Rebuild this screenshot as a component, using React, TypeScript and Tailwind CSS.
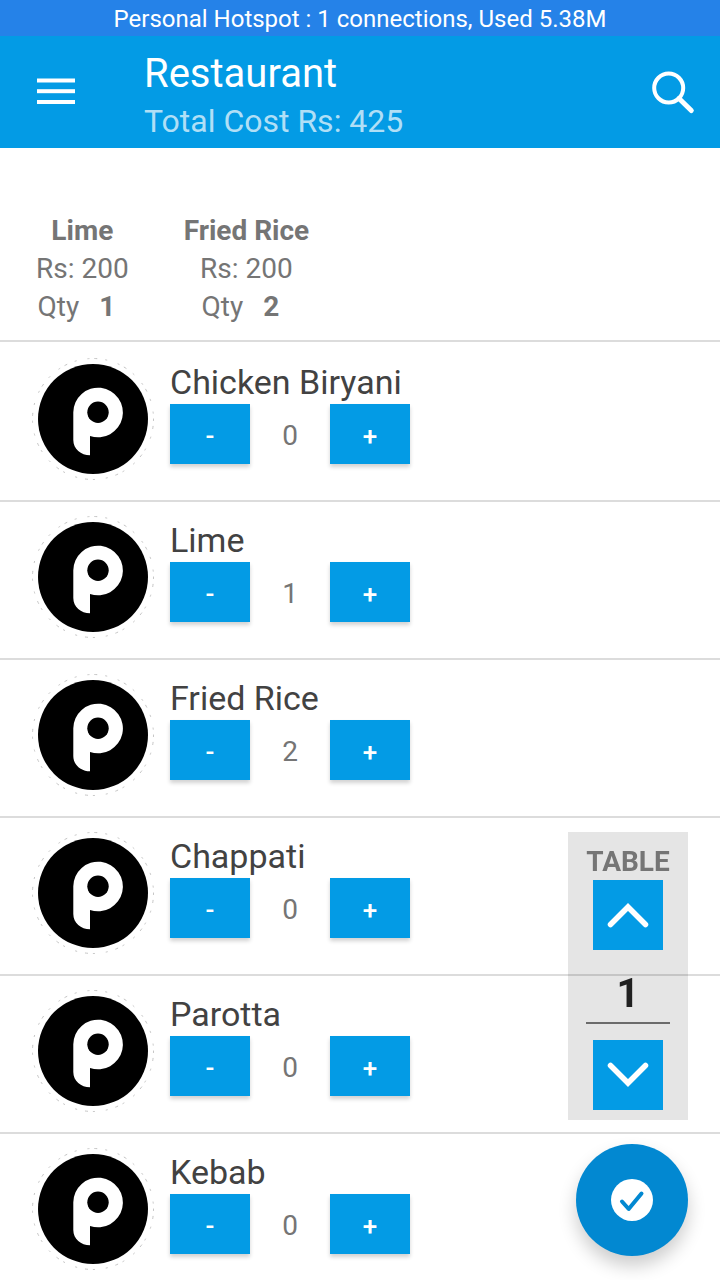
import React, { useState } from "react";

const menu = [
  { name: "Chicken Biryani", price: 225, qty: 0 },
  { name: "Lime", price: 200, qty: 1 },
  { name: "Fried Rice", price: 200, qty: 2 },
  { name: "Chappati", price: 15, qty: 0 },
  { name: "Parotta", price: 15, qty: 0 },
  { name: "Kebab", price: 150, qty: 0 },
];

const ItemLogo = () => (
  <svg viewBox="0 0 122 122" className="w-[122px] h-[122px] shrink-0" aria-hidden="true">
    {/* faint broken ring around the badge */}
    <circle
      cx="61"
      cy="61"
      r="60.5"
      fill="none"
      stroke="#c4c4c4"
      strokeWidth="1"
      strokeDasharray="2 5 3 8 2 11"
    />
    <circle cx="61" cy="61" r="55" fill="#000" />
    <path
      d="M41.3 54.3a24.8 24.8 0 1 1 16.7 23.6V97.3C49 97.3 41.3 91 41.3 82Z"
      fill="#fff"
    />
    <circle cx="66" cy="54.3" r="10.7" fill="#000" />
  </svg>
);

const Header = () => (
  <header className="h-28 shrink-0 bg-[#039be5] text-white flex items-center pl-9 pr-6">
    <button type="button" aria-label="Open menu" className="w-10 h-10">
      <svg viewBox="0 0 40 40" className="w-10 h-10" fill="#fff">
        <rect x="1" y="6.5" width="38" height="4" />
        <rect x="1" y="17.2" width="38" height="4" />
        <rect x="1" y="28" width="38" height="4" />
      </svg>
    </button>
    <div className="flex-1 pl-[68px] pt-[10px]">
      <h1 className="text-[40px] leading-[48px]">Restaurant</h1>
      <p className="text-[32px] leading-[46px] text-white/70">Total Cost Rs: 425</p>
    </div>
    <button type="button" aria-label="Search" className="w-12 h-12">
      <svg viewBox="0 0 48 48" className="w-12 h-12" fill="none" stroke="#fff">
        <circle cx="20.7" cy="20" r="14.5" strokeWidth="4" />
        <path d="M31 30.5 43.3 42.5" strokeWidth="5" strokeLinecap="round" />
      </svg>
    </button>
  </header>
);

const Summary = () => (
  <section className="h-[194px] shrink-0 border-b-2 border-[#dcdcdc] flex items-start gap-[55px] pt-16 pl-9 text-[28px] leading-[38px]">
    {menu
      .filter((item) => item.qty > 0)
      .map((item) => (
        <div key={item.name} className="flex flex-col items-center">
          <p className="font-bold">{item.name}</p>
          <p>Rs: {item.price}</p>
          <p className="flex gap-5 pr-3">
            <span>Qty</span>
            <span className="font-bold">{item.qty}</span>
          </p>
        </div>
      ))}
  </section>
);

const stepButton =
  "w-20 h-[60px] pt-1 bg-[#039be5] text-white text-[26px] font-medium shadow-[0_3px_4px_rgba(0,0,0,0.18)]";

const MenuRow = ({ name, initial }: { name: string; initial: number }) => {
  const [qty, setQty] = useState(initial);

  return (
    <li className="h-[158px] shrink-0 border-b-2 border-[#dcdcdc] flex items-start gap-4 px-8">
      <div className="pt-[14px]">
        <ItemLogo />
      </div>
      <div className="pt-[18px]">
        <h2 className="pb-[2px] text-[34px] leading-[40px] text-[#424242]">{name}</h2>
        <div className="flex items-center">
          <button
            type="button"
            aria-label={`Remove one ${name}`}
            className={stepButton}
            onClick={() => setQty(Math.max(0, qty - 1))}
          >
            -
          </button>
          <span className="w-20 pt-1 text-center text-[28px]">{qty}</span>
          <button
            type="button"
            aria-label={`Add one ${name}`}
            className={stepButton}
            onClick={() => setQty(qty + 1)}
          >
            +
          </button>
        </div>
      </div>
    </li>
  );
};

const TablePicker = () => {
  const [table, setTable] = useState("1");

  return (
    <div className="fixed right-8 bottom-40 w-[120px] h-72 bg-black/10 flex flex-col items-center pt-3">
      <label htmlFor="table" className="text-[28px] leading-9 font-bold">
        TABLE
      </label>
      <button
        type="button"
        aria-label="Next table"
        className="w-[70px] h-[70px] shrink-0 bg-[#039be5]"
        onClick={() => setTable(String(Number(table) + 1))}
      >
        <svg viewBox="0 0 70 70" fill="none" stroke="#fff" strokeWidth="5.5" strokeLinecap="round">
          <path d="M17.5 44.5 35 27 52.5 44.5" />
        </svg>
      </button>
      <input
        id="table"
        value={table}
        onChange={(e) => setTable(e.target.value)}
        className="w-[84px] h-[58px] mt-4 mb-4 border-b-2 border-[#6b6b6b] bg-transparent text-center text-[40px] font-bold text-[#212121] outline-none"
      />
      <button
        type="button"
        aria-label="Previous table"
        className="w-[70px] h-[70px] shrink-0 bg-[#039be5]"
        onClick={() => setTable(String(Math.max(1, Number(table) - 1)))}
      >
        <svg viewBox="0 0 70 70" fill="none" stroke="#fff" strokeWidth="5.5" strokeLinecap="round">
          <path d="M17.5 25.5 35 43 52.5 25.5" />
        </svg>
      </button>
    </div>
  );
};

export default function App() {
  return (
    <div className="h-screen flex flex-col bg-white text-[#757575] font-['Roboto',sans-serif]">
      <div className="h-9 shrink-0 bg-[#2582e8] text-white text-center text-2xl leading-[38px]">
        Personal Hotspot : 1 connections, Used 5.38M
      </div>
      <Header />
      <Summary />
      <ul className="flex-1 min-h-0 overflow-y-auto [scrollbar-width:none] pt-[2px]">
        {menu.map((item) => (
          <MenuRow key={item.name} name={item.name} initial={item.qty} />
        ))}
      </ul>

      <TablePicker />

      <button
        type="button"
        aria-label="Place order"
        className="fixed right-8 bottom-6 w-28 h-28 rounded-full bg-[#0288d1] flex items-center justify-center shadow-[0_10px_18px_rgba(0,0,0,0.2)]"
      >
        <svg viewBox="0 0 42 42" className="w-[42px] h-[42px]" fill="none">
          <circle cx="21" cy="21" r="21" fill="#fff" />
          <path
            d="M11 22.5 17.7 30 30.5 14.5"
            stroke="#0288d1"
            strokeWidth="4"
            strokeLinecap="round"
            strokeLinejoin="round"
          />
        </svg>
      </button>
    </div>
  );
}
